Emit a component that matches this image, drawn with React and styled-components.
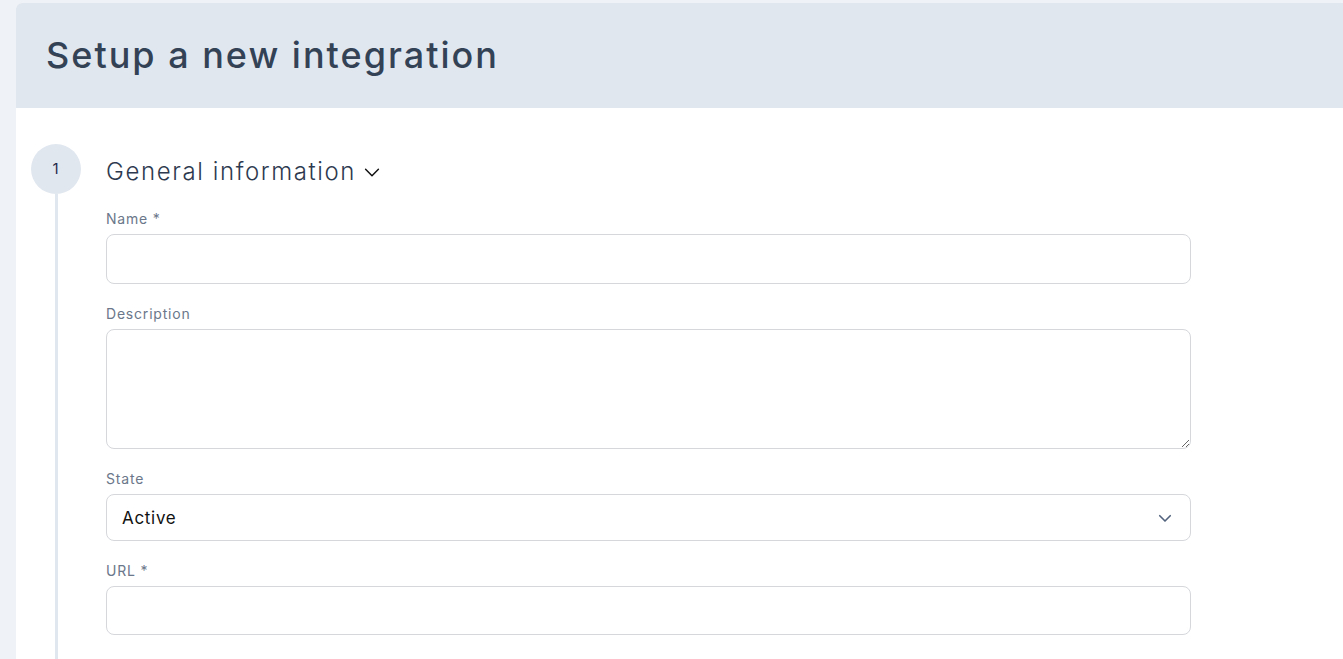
import styled, { createGlobalStyle } from 'styled-components';

const GlobalStyle = createGlobalStyle`
  * { box-sizing: border-box; }
  html, body {
    margin: 0;
    padding: 0;
    background: #eff2f7;
    font-family: Inter, "Noto Sans", Arial, sans-serif;
    overflow: hidden;
  }
`;

const Page = styled.div`
  padding: 3px 0 0 16px;
  height: 659px;
`;

const Card = styled.div`
  background: #fff;
  border-top-left-radius: 6px;
  overflow: hidden;
  height: 100%;
  width: calc(100% + 8px);
`;

const Header = styled.div`
  background: #e1e7ef;
  height: 105px;
  display: flex;
  align-items: center;
  padding-left: 30px;
`;

const Title = styled.h1`
  margin: 0;
  font-size: 36px;
  font-weight: 500;
  color: #344256;
  letter-spacing: 2px;
  padding-bottom: 2px;
`;

const Body = styled.div`
  display: flex;
  padding: 36px 0 0 15px;
`;

const Rail = styled.div`
  width: 50px;
  display: flex;
  flex-direction: column;
  align-items: center;
  flex-shrink: 0;
`;

const StepCircle = styled.div`
  width: 50px;
  height: 50px;
  border-radius: 50%;
  background: #e1e7ef;
  color: #1e2a4a;
  font-size: 15px;
  display: flex;
  align-items: center;
  justify-content: center;
  padding: 0 1px 1px 0;
`;

const RailLine = styled.div`
  width: 3px;
  flex: 1;
  background: #e1e7ef;
  min-height: 500px;
`;

const Content = styled.div`
  width: 1085px;
  margin-left: 25px;
  padding-top: 13px;
`;

const SectionTitle = styled.h2`
  margin: 0 0 24px;
  font-size: 24px;
  font-weight: 300;
  color: #2e3a4f;
  letter-spacing: 1.6px;
  display: flex;
  align-items: center;
  gap: 5px;
  line-height: 30px;
`;

const Field = styled.div`
  margin-bottom: 22px;
`;

const Label = styled.label`
  display: block;
  font-size: 14px;
  color: #6b778a;
  letter-spacing: 0.8px;
  margin-bottom: 7px;
  line-height: 16px;
`;

const Input = styled.input`
  display: block;
  width: 100%;
  height: ${p => p.$h || 50}px;
  border: 1px solid #d5d7db;
  border-radius: 8px;
  background: #fff;
  font: inherit;
  outline: none;
`;

const TextArea = styled.textarea`
  display: block;
  width: 100%;
  height: 120px;
  border: 1px solid #d5d7db;
  border-radius: 8px;
  font: inherit;
  outline: none;
  resize: vertical;
`;

const SelectBox = styled.div`
  height: 47px;
  border: 1px solid #d5d7db;
  border-radius: 8px;
  display: flex;
  align-items: center;
  justify-content: space-between;
  padding: 0 16px 0 15px;
  font-size: 17px;
  letter-spacing: 0.7px;
  color: #111;
`;

const Chevron = ({ size, color, width }) => (
  <svg width={size} height={size} viewBox="0 0 24 24" fill="none" stroke={color} strokeWidth={width} strokeLinecap="round" strokeLinejoin="round">
    <path d="M5 9l7 7 7-7" />
  </svg>
);

export default function App() {
  return (
    <>
      <GlobalStyle />
      <Page>
        <Card>
          <Header>
            <Title>Setup a new integration</Title>
          </Header>
          <Body>
            <Rail>
              <StepCircle>1</StepCircle>
              <RailLine />
            </Rail>
            <Content>
              <SectionTitle>
                General information
                <Chevron size={22} color="#111" width={1.6} />
              </SectionTitle>
              <Field>
                <Label>Name *</Label>
                <Input />
              </Field>
              <Field>
                <Label>Description</Label>
                <TextArea />
              </Field>
              <Field>
                <Label>State</Label>
                <SelectBox>
                  Active
                  <Chevron size={18} color="#52637e" width={2.2} />
                </SelectBox>
              </Field>
              <Field>
                <Label>URL *</Label>
                <Input $h={49} />
              </Field>
            </Content>
          </Body>
        </Card>
      </Page>
    </>
  );
}
